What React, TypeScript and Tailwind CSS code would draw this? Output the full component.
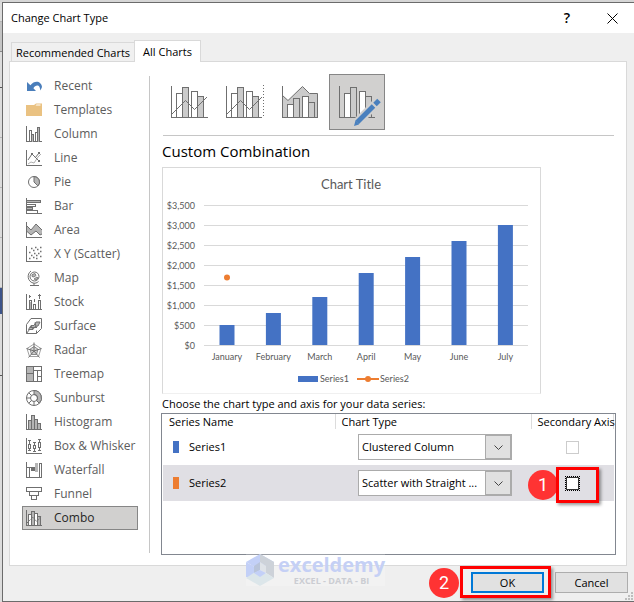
import React, { useState } from 'react';

type ChartKind = {
  name: string;
  icon: React.ReactNode;
};

type Series = {
  name: string;
  swatch: string;
  chartType: string;
};

const LINE = '#6f6f6f';
const FILL = '#b5b5b5';

const axes = <path d="M.5 0v15.5H16" shapeRendering="crispEdges" />;

const chartKinds: ChartKind[] = [
  {
    name: 'Recent',
    icon: (
      <g stroke="none" fill="#4a7ebb">
        <path d="M1 4v9h9L7.400 10.200C9 7.500 12 6.500 13.500 9L14.500 12.500 16 9C15.500 3.500 9 1.500 4.400 7.200Z" />
      </g>
    )
  },
  {
    name: 'Templates',
    icon: (
      <g stroke="none">
        <path d="M0 3h8l2-1.500h6V14H0Z" fill="#eac282" />
        <path d="M10.500 2.500h4v1h-5Z" fill="#fff" />
      </g>
    )
  },
  {
    name: 'Column',
    icon: (
      <g shapeRendering="crispEdges">
        {axes}
        <path d="M3.500 15.500v-11h2v11M9.500 15.500v-9h2" />
        <path d="M5.500 15.500v-7h2v7M11.500 15.500v-14h2v14" fill={FILL} />
      </g>
    )
  },
  {
    name: 'Line',
    icon: (
      <g>
        <path d="M2 14l3-2 3 1 4-6 3-3" stroke="#b0b0b0" />
        <path d="M2 10l4-6 7 7M9 8l4-5" />
        {axes}
        <path d="M5 3h2v2H5zM12 2h2v2h-2zM12 10h2v2h-2z" fill={LINE} stroke="none" />
      </g>
    )
  },
  {
    name: 'Pie',
    icon: (
      <g>
        <circle cx="8" cy="8" r="5.500" />
        <path d="M8 2.500V8l3.900 3.900A5.500 5.500 0 0 0 8 2.500Z" fill={FILL} />
      </g>
    )
  },
  {
    name: 'Bar',
    icon: (
      <g shapeRendering="crispEdges">
        <path d="M.5 6.500h9v2h-9M.5 12.500h11v2" />
        <path d="M.5 2.500h14v2H.5zM.5 9.500h6v2h-6z" fill={FILL} />
        <path d="M.5 0v15.500H16" />
      </g>
    )
  },
  {
    name: 'Area',
    icon: (
      <g>
        <path d="M.5 3.500 5 8l5-6 6 6v4l-2 1-4-4-5 4-4.500-4Z" fill={FILL} stroke="none" />
        <path d="M.5 3.500 5 8l5-6 6 6M.5 9l4.500 4 5-4 4 4 2-1" />
        {axes}
      </g>
    )
  },
  {
    name: 'X Y (Scatter)',
    icon: (
      <g>
        {axes}
        <path
          d="M3 6.500h1.500M5 9.500h1.500M3 12.500h1.500M7 4.500h1.500M8 7.500h1.500M7 11.500h1.500M10 9.500h1.500M10 12.500h1.500M11 3.500h1.500M14 1.500h1.500M12 7.500h1.500M14 5.500h1.500M14 10.500h1.500M5 2.500h1.500M9 1.500h1.500"
          strokeWidth="1.500"
        />
      </g>
    )
  },
  {
    name: 'Map',
    icon: (
      <g>
        <circle cx="8.500" cy="6.500" r="4.500" />
        <path d="M5 1C.5 4 1.500 11.500 7 13c2 .5 4 0 5.500-1.500M8 13v2M4 15.500h9" />
        <path d="M6 4.500l3-1 1 2-2 1.500-2-.5ZM8 9l3-2 1 1-2 2Z" fill={FILL} strokeWidth=".8" />
      </g>
    )
  },
  {
    name: 'Stock',
    icon: (
      <g shapeRendering="crispEdges">
        {axes}
        <path d="M3.500 1v3M4 2.500h1M8.500 5v3M13.500 0v5M12 1.500h3" />
        <path d="M3.500 15.500v-9h2v9M7.500 15.500v-5h2v5M12.500 15.500v-9h2v9" />
        <path d="M4 8h1v7H4z" fill={FILL} stroke="none" />
      </g>
    )
  },
  {
    name: 'Surface',
    icon: (
      <g>
        <path d="M.5 6.500v9h10l5-5V.5H5ZM10.500 15.500v-3M.5 15.500l3-4" />
        <path d="M2.500 11.500l2.500-4h3l2-3.500h4l-2 4-3 .5-2 3Z" fill={FILL} />
        <path d="M5 8l2 3M9 4.500l1 4M4 9.500h7" />
      </g>
    )
  },
  {
    name: 'Radar',
    icon: (
      <g>
        <path d="M8 2l7 4.500-2.500 8h-9L1 6.500Z" stroke="#a0a0a0" />
        <path d="M8 4.500l4 2.700-1.500 5.300h-5L4 7.200Z" fill="#d0d0d0" stroke="#8a8a8a" />
        <path d="M8 .5V9M.5 6.500 8 9l7.500-2.500M2.500 15.500 8 9l5.500 6.500" />
      </g>
    )
  },
  {
    name: 'Treemap',
    icon: (
      <g shapeRendering="crispEdges">
        <path d="M.5.5h7v15h-7z" fill={FILL} />
        <path d="M.5.5h15v15H.5zM.5 7.500h7M7.500 4.500h8M11.500 4.500v11M11.500 10.500h4" />
      </g>
    )
  },
  {
    name: 'Sunburst',
    icon: (
      <g>
        <circle cx="8" cy="8" r="7.500" />
        <path d="M8 .5a7.500 7.500 0 0 1 5.300 12.800L10.500 10.500A3.500 3.500 0 0 0 8 4.500Z" fill={FILL} />
        <circle cx="8" cy="8" r="3.500" />
        <path d="M.5 8h4M2.700 13.300l2.800-2.800M8 11.500v4M2.700 2.700l2.800 2.800" />
      </g>
    )
  },
  {
    name: 'Histogram',
    icon: (
      <g shapeRendering="crispEdges">
        <path d="M2.500 15.500v-9h3v9zM5.500 15.500v-14h3v14zM8.500 15.500v-10h3v10zM11.500 15.500v-6h3v6z" fill={FILL} />
        {axes}
      </g>
    )
  },
  {
    name: 'Box & Whisker',
    icon: (
      <g shapeRendering="crispEdges">
        {axes}
        <path d="M2 2.500h3M3.500 3v3M2.500 6.500h2v4h-2zM3.500 11v2M2 12.500h3" />
        <path d="M7 4.500h3M8.500 4v3M7.500 7.500h2v3h-2zM8.500 11v3M7 13.500h3" />
        <path d="M12 1.500h3M13.500 1v3M12.500 4.500h2v5h-2zM13.500 10v3M12 12.500h3" />
      </g>
    )
  },
  {
    name: 'Waterfall',
    icon: (
      <g shapeRendering="crispEdges">
        <path d="M5 5h4v4H5z" fill={LINE} stroke="none" />
        <path d="M9 1h3v9H9z" fill={FILL} stroke="none" />
        <path d="M.5 0v15.500h15V1.500h-2v14M1 5.500h4M3.500 5v10" />
      </g>
    )
  },
  {
    name: 'Funnel',
    icon: (
      <g shapeRendering="crispEdges">
        <path d="M.5 1.500h15v4H.5zM3.500 5.500h9v4h-9zM5.500 9.500h5v4h-5z" />
      </g>
    )
  },
  {
    name: 'Combo',
    icon: (
      <g shapeRendering="crispEdges">
        <path d="M2.500 15.500v-11h3v11" fill="#fff" />
        <path d="M5.500 15.500v-14h3v14" fill={FILL} />
        <path d="M8.500 15.500v-12h3v12" fill="#fff" />
        <path d="M11.500 15.500v-9h3v9" fill={FILL} />
        <path d="M1 13l6-6 4 5 4-6" shapeRendering="auto" strokeDasharray="1.500 1" />
        {axes}
      </g>
    )
  }
];

const comboBars = (
  <>
    <path d="M15.500 43.500v-24h6v24M30.500 43.500v-26h6v26" fill="#fff" />
    <path d="M21.500 43.500v-30h6v30M36.500 43.500v-21h6v21" fill="#cbcbcb" />
  </>
);

const comboStyles = [
  {
    label: 'Clustered Column - Line',
    drawing: (
      <>
        {comboBars}
        <path d="M10.500 12v31.500H47" />
        <path d="M11 40l13.500-13.500 9 9L46 23" shapeRendering="auto" />
      </>
    )
  },
  {
    label: 'Clustered Column - Line on Secondary Axis',
    drawing: (
      <>
        <g transform="translate(-1 0)">
          {comboBars}
          <path d="M10.500 12v31.500H46" />
          <path d="M11 40l13.500-13.500 9 9L46 23" shapeRendering="auto" />
        </g>
        <path d="M46.500 11v33" strokeDasharray="1 2" />
      </>
    )
  },
  {
    label: 'Stacked Area - Clustered Column',
    drawing: (
      <>
        <path
          d="M9.500 21.500l5.500 5 14.500-14 7 7h8v24h-35Z"
          fill="#cbcbcb"
          shapeRendering="auto"
        />
        <path d="M14.500 43.500v-13h6v13M29.500 43.500v-21h6v21" fill="#fff" />
        <path d="M20.500 43.500v-19h6v19M35.500 43.500v-15h6v15" fill="#cbcbcb" />
        <path d="M9.500 12v31.500h35" />
      </>
    )
  },
  {
    label: 'Custom Combination',
    drawing: (
      <>
        {comboBars}
        <path d="M10.500 12v31.500H46" />
        <g shapeRendering="auto">
          <path d="M27 49.500L49 27.500" stroke="#d1d0cf" strokeWidth="9" />
          <path d="M25 52l1.500-5.500 3.500 4Z" fill="#4a80be" stroke="none" />
          <path d="M28 48.500L44.500 32" stroke="#4a80be" strokeWidth="5" />
          <path d="M46 30.500l4-4" stroke="#4a80be" strokeWidth="5" />
        </g>
      </>
    )
  }
];

const months = ['January', 'February', 'March', 'April', 'May', 'June', 'July'];
const values = [500, 800, 1200, 1800, 2200, 2600, 3000];
const ticks = [0, 500, 1000, 1500, 2000, 2500, 3000, 3500];

const seriesList: Series[] = [
  { name: 'Series1', swatch: 'bg-[#4472c4]', chartType: 'Clustered Column' },
  { name: 'Series2', swatch: 'bg-[#ed7d31]', chartType: 'Scatter with Straight ...' }
];

const ChartPreview: React.FC = () => {
  const baseline = 178;
  const perUnit = 0.04;

  return (
    <svg
      viewBox="0 0 377 225"
      className="block w-full font-[Lato,sans-serif] text-[9px]"
      fill="#595959"
      role="img"
      aria-label="Chart preview"
    >
      <text x="188" y="21" textAnchor="middle" className="text-[13px]">
        Chart Title
      </text>
      {ticks.map((tick) => (
        <g key={tick}>
          <rect x="41" y={baseline - 1 - tick * perUnit} width="324" height="1" fill="#d9d9d9" />
          <text x="32" y={baseline + 3 - tick * perUnit} textAnchor="end">
            ${tick.toLocaleString('en-US')}
          </text>
        </g>
      ))}
      {values.map((value, i) => (
        <g key={months[i]}>
          <rect
            x={56.5 + i * 46.4}
            y={baseline - 1 - value * perUnit}
            width="15"
            height={value * perUnit}
            fill="#4472c4"
          />
          <text x={64 + i * 46.4} y="192" textAnchor="middle">
            {months[i]}
          </text>
        </g>
      ))}
      <circle cx="64" cy="109.500" r="3" fill="#ed7d31" />
      <rect x="135" y="208" width="20" height="6" fill="#4472c4" />
      <text x="157" y="214">
        Series1
      </text>
      <path d="M194 211h22" stroke="#ed7d31" strokeWidth="2" />
      <circle cx="205" cy="211" r="3" fill="#ed7d31" />
      <text x="217" y="214">
        Series2
      </text>
    </svg>
  );
};

const StepBadge: React.FC<{ step: number; className: string }> = ({ step, className }) => (
  <span
    className={`absolute flex size-[30px] items-center justify-center rounded-full bg-[#ff3333] font-[Roboto,sans-serif] text-lg text-white ${className}`}
  >
    {step}
  </span>
);

const Watermark: React.FC = () => (
  <div className="pointer-events-none absolute -top-3 left-[243px] flex items-center gap-1 bg-white/20">
    <svg width="28" height="32" viewBox="0 0 28 32" aria-hidden="true">
      <path d="M14 0L28 8 14 16 0 8Z" fill="#c3d0f7" />
      <path d="M0 8l14 8v0L5 24l-5-1Z" fill="#c3d0f7" />
      <path d="M14 0l14 8v16l-8-5v-7l-6-4Z" fill="#cdd2d9" />
      <path d="M0 24l9-6 5 4 6-3 8 5-14 8Z" fill="#dce6ea" />
      <path d="M14 8l6 4v7l-6-3Z" fill="#dfe3e8" />
      <path d="M8 12l6-4v8l-6 3Z" fill="#b9c4da" />
      <path d="M8 19l6-3 6 3-6 4Z" fill="#c3d0f7" />
    </svg>
    <div className="flex flex-col items-center font-['Open_Sans',sans-serif] font-bold">
      <span className="text-xl leading-[21px] text-[#c5d0f5]">exceldemy</span>
      <span className="text-[9px] leading-[11px] text-[#cbcdd2]">EXCEL - DATA - BI</span>
    </div>
  </div>
);

const App: React.FC = () => {
  const [activeKind, setActiveKind] = useState('Combo');
  const [activeStyle, setActiveStyle] = useState(3);

  return (
    <div className="flex min-h-screen bg-[#d6d6d6] pt-0.5 font-['Open_Sans',sans-serif] text-[11px] text-black">
      {/* Sliver of the worksheet behind the dialog */}
      <div className="flex w-0.5 flex-col bg-[#dcdcdc]">
        <div className="h-5 border-b border-[#b5b5b5]" />
        <div className="h-[30px] border-b border-[#888] bg-[#c4c4c4]" />
        <div className="h-9 border-b border-[#555]" />
        <div className="h-[50px] border-b border-[#b5b5b5]" />
        <div className="h-[50px] border-b border-[#b5b5b5]" />
        <div className="h-[50px] border-b border-[#b5b5b5]" />
        <div className="h-[50px] border-b border-[#b5b5b5]" />
        <div className="h-[26px] bg-[#3d548a]" />
        <div className="h-[62px] border-b border-[#555]" />
      </div>

      <div className="flex min-w-0 flex-1 flex-col border-y border-l border-[#6b6b6b] bg-[#efefef]">
        <header className="flex h-[30px] items-center bg-white pr-0.5 pl-2">
          <h1 className="flex-1 text-[11px]">Change Chart Type</h1>
          <button type="button" aria-label="Help" className="w-[50px] text-sm font-semibold">
            ?
          </button>
          <button type="button" aria-label="Close" className="flex w-10 justify-center">
            <svg width="11" height="11" viewBox="0 0 11 11" stroke="#000">
              <path d="M.5.5l10 10M10.500.5l-10 10" />
            </svg>
          </button>
        </header>

        <div role="tablist" className="flex items-end pt-[7px] pl-2">
          <button
            type="button"
            role="tab"
            aria-selected="false"
            className="h-[19px] border border-r-0 border-b-0 border-[#d9d9d9] bg-[#f0f0f0] px-1 leading-[20px]"
          >
            Recommended Charts
          </button>
          <button
            type="button"
            role="tab"
            aria-selected="true"
            className="relative z-10 -mb-px h-[22px] border border-b-0 border-[#d9d9d9] bg-white px-2 leading-[20px]"
          >
            All Charts
          </button>
        </div>

        <main className="mr-[7px] ml-1.5 flex border border-[#d9d9d9] bg-white pt-3 pr-2.5 pb-2.5 pl-3">
          <nav className="w-[116px] shrink-0">
            {chartKinds.map((kind) => (
              <button
                key={kind.name}
                type="button"
                onClick={() => setActiveKind(kind.name)}
                className={`flex h-6 w-full items-center gap-3 border pl-[3px] text-xs whitespace-nowrap ${
                  kind.name === activeKind
                    ? 'border-[#868686] bg-[#d1d0cf] text-[#262626]'
                    : 'border-transparent text-[#5c5c5c]'
                }`}
              >
                <svg
                  width="16"
                  height="16"
                  viewBox="0 0 16 16"
                  fill="none"
                  stroke={LINE}
                  className="shrink-0"
                  aria-hidden="true"
                >
                  {kind.icon}
                </svg>
                {kind.name}
              </button>
            ))}
          </nav>

          <div className="my-0.5 mr-[11px] ml-[11px] w-px shrink-0 bg-[#c6c6c6]" />

          <section className="flex min-w-0 flex-1 flex-col">
            <div className="flex">
              {comboStyles.map((style, i) => (
                <button
                  key={style.label}
                  type="button"
                  aria-label={style.label}
                  onClick={() => setActiveStyle(i)}
                  className={`size-14 ${
                    i === activeStyle ? 'bg-[#d1d0cf] ring-1 ring-[#868686] ring-inset' : ''
                  }`}
                >
                  <svg
                    width="56"
                    height="56"
                    viewBox="0 0 56 56"
                    fill="none"
                    stroke={LINE}
                    shapeRendering="crispEdges"
                    aria-hidden="true"
                  >
                    {style.drawing}
                  </svg>
                </button>
              ))}
            </div>
            <hr className="mx-0.5 mt-[5px] border-[#c6c6c6]" />
            <h2 className="pl-px text-[15px] leading-[31px]">Custom Combination</h2>

            <div className="ml-px max-w-[379px] border border-[#d9d9d9] border-b-[#f0f0f0]">
              <ChartPreview />
            </div>

            <p className="pl-px leading-[19px]">Choose the chart type and axis for your data series:</p>

            <div className="min-h-[142px] border border-[#828790] px-px">
              <table className="w-full table-fixed text-left">
                <thead>
                  <tr className="h-[15px] leading-[14px]">
                    <th className="w-[172px] border-r border-[#dcdcdc] pl-1.5 font-normal">Series Name</th>
                    <th className="w-[196px] border-r border-[#dcdcdc] pl-1.5 font-normal">Chart Type</th>
                    <th className="border-r border-[#dcdcdc] pl-1.5 font-normal whitespace-nowrap">
                      Secondary Axis
                    </th>
                  </tr>
                </thead>
                <tbody>
                  {seriesList.map((series, i) => (
                    <tr key={series.name} className={i === 1 ? 'h-9 bg-[#e0dfe4]' : 'h-9'}>
                      <td className="pl-2.5">
                        <div className="flex items-center gap-2.5">
                          <span className={`h-3 w-1.5 ${series.swatch}`} />
                          {series.name}
                        </div>
                      </td>
                      <td className="pl-[23px]">
                        <div className="relative w-[154px]">
                          <select
                            aria-label={`Chart type for ${series.name}`}
                            className="block h-[26px] w-full appearance-none border border-[#ababab] bg-white pl-[3px]"
                          >
                            <option>{series.chartType}</option>
                          </select>
                          <span className="pointer-events-none absolute inset-y-0 right-0 flex w-[27px] items-center justify-center border-2 border-l border-[#ababab] bg-[#e1e1e1]">
                            <svg width="9" height="5" viewBox="0 0 9 5" fill="none" stroke="#444">
                              <path d="M.5.5l4 4 4-4" />
                            </svg>
                          </span>
                        </div>
                      </td>
                      <td className="relative">
                        <input
                          type="checkbox"
                          aria-label={`Secondary axis for ${series.name}`}
                          className={`mx-auto block size-[13px] appearance-none border bg-white ${
                            i === 1
                              ? 'border-[#333] outline-1 outline-black outline-dotted'
                              : 'border-[#cccccc]'
                          }`}
                        />
                        {i === 1 && (
                          <>
                            <StepBadge step={1} className="top-[5px] -left-[3px]" />
                            <span className="pointer-events-none absolute top-0.5 left-[25px] h-9 w-[43px] border-3 border-[#ff0000] shadow-[2px_2px_3px_rgba(0,0,0,0.4)]" />
                          </>
                        )}
                      </td>
                    </tr>
                  ))}
                </tbody>
              </table>
            </div>
          </section>
        </main>

        <footer className="relative flex h-[35px] justify-end gap-[11px] pt-1.5 pr-1.5">
          <Watermark />
          <div className="relative">
            <StepBadge step={2} className="-top-1 -left-[42px]" />
            <button
              type="button"
              className="h-[21px] w-[73px] border-2 border-[#0078d7] bg-[#e1e1e1] leading-[17px]"
            >
              OK
            </button>
            <span className="pointer-events-none absolute -top-1.5 -left-[11px] h-8 w-[91px] border-3 border-[#ff0000] shadow-[2px_2px_3px_rgba(0,0,0,0.4)]" />
          </div>
          <button
            type="button"
            className="h-[21px] w-[73px] border border-[#adadad] bg-[#e1e1e1] leading-[19px]"
          >
            Cancel
          </button>
          <svg
            width="9"
            height="9"
            viewBox="0 0 9 9"
            className="absolute right-0 bottom-0"
            fill="#bdbdbd"
            aria-hidden="true"
          >
            <path d="M6 0h2v2H6zM3 3h2v2H3zM6 3h2v2H6zM0 6h2v2H0zM3 6h2v2H3zM6 6h2v2H6z" />
          </svg>
        </footer>
      </div>
    </div>
  );
};

export default App;
